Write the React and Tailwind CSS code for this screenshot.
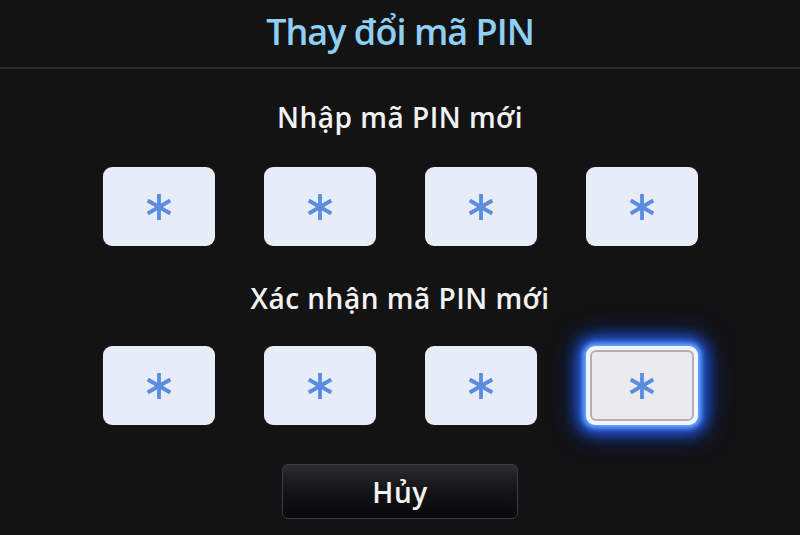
const FONT = { fontFamily: '"Open Sans", "Noto Sans", sans-serif' };

function Star() {
  return (
    <svg width="28" height="28" viewBox="0 0 28 28" className="text-[#5a8ce0]">
      <g stroke="currentColor" strokeWidth="3.8" strokeLinecap="butt">
        <line x1="14" y1="1" x2="14" y2="27" />
        <line x1="2.7" y1="7.5" x2="25.3" y2="20.5" />
        <line x1="2.7" y1="20.5" x2="25.3" y2="7.5" />
      </g>
    </svg>
  );
}

function PinBox({ focused }) {
  if (focused) {
    return (
      <div className="w-[112px] h-[79px] rounded-[9px] p-[4px] bg-[#f2f4ff] shadow-[0_0_5px_3px_#6aaaff,0_0_14px_8px_#2a5fe8,0_0_24px_10px_#0f2f90]">
        <div className="w-full h-full rounded-[6px] border-2 border-[#b4b1b4] bg-[#ebeaee] flex items-center justify-center">
          <Star />
        </div>
      </div>
    );
  }
  return (
    <div className="w-[112px] h-[79px] rounded-[9px] bg-[#e7ecf8] flex items-center justify-center">
      <Star />
    </div>
  );
}

function PinRow({ focusLast }) {
  return (
    <div className="flex gap-[49px] justify-center">
      <PinBox />
      <PinBox />
      <PinBox />
      <PinBox focused={focusLast} />
    </div>
  );
}

export default function App() {
  return (
    <div className="w-[800px] h-[535px] bg-[#131314] flex flex-col overflow-hidden" style={FONT}>
      {/* header */}
      <div className="h-[67px] flex items-center justify-center">
        <h1 className="text-[36px] text-[#8fcff3] font-semibold leading-none tracking-[-1px] -mt-1">
          Thay đổi mã PIN
        </h1>
      </div>
      <div className="h-[2px] bg-[#2a2a2c]" />

      <div className="flex flex-col items-center pt-[34px]">
        <p className="text-[28px] font-semibold text-[#f2f2f2] leading-none tracking-[0.5px]">Nhập mã PIN mới</p>
        <div className="mt-[36px]">
          <PinRow />
        </div>
        <p className="mt-[38px] text-[28px] font-semibold text-[#f2f2f2] leading-none tracking-[0.5px]">Xác nhận mã PIN mới</p>
        <div className="mt-[34px]">
          <PinRow focusLast />
        </div>
        <button className="mt-[39px] w-[236px] h-[55px] rounded-[6px] border border-[#3c3c3f] bg-gradient-to-b from-[#2c2d31] via-[#141416] to-[#08080a] text-[28px] font-semibold text-[#f2f2f2] leading-none tracking-[0.5px]">
          Hủy
        </button>
      </div>
    </div>
  );
}
